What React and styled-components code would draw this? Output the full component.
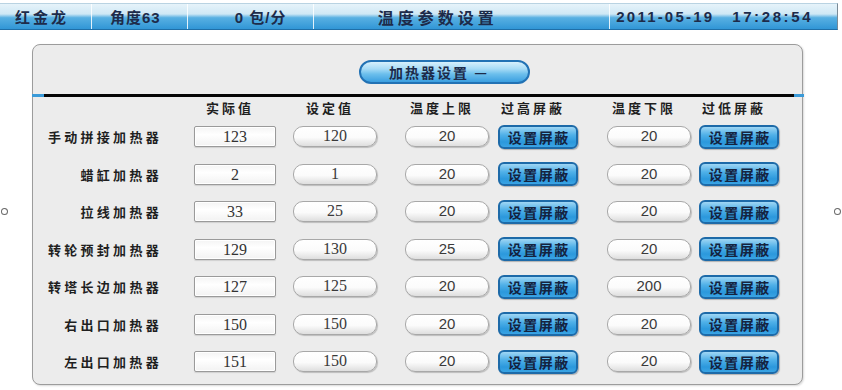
import React from 'react';
import styled, {createGlobalStyle} from 'styled-components';

const GlobalStyle = createGlobalStyle`
  html, body {
    margin: 0;
    padding: 0;
    background: #ffffff;
    font-family: "Liberation Sans", "Noto Sans CJK SC", sans-serif;
  }
  * {
    box-sizing: border-box;
  }
`;

const rows = [
  {name: '手动拼接加热器', actual: 123, set: 120, high: 20, low: 20},
  {name: '蜡缸加热器', actual: 2, set: 1, high: 20, low: 20},
  {name: '拉线加热器', actual: 33, set: 25, high: 20, low: 20},
  {name: '转轮预封加热器', actual: 129, set: 130, high: 25, low: 20},
  {name: '转塔长边加热器', actual: 127, set: 125, high: 20, low: 200},
  {name: '右出口加热器', actual: 150, set: 150, high: 20, low: 20},
  {name: '左出口加热器', actual: 151, set: 150, high: 20, low: 20},
];

const headers = ['实际值', '设定值', '温度上限', '过高屏蔽', '温度下限', '过低屏蔽'];
const headerWidths = [82, 84, 84, 80, 84, 80];

const App = () => {
  return (
    <Screen>
      <GlobalStyle />
      <TopBar>
        <BarCell $w={92} $pad={15} $spacing={3}>红金龙</BarCell>
        <BarCell $w={96} $pad={18}>角度63</BarCell>
        <BarCell $w={126} $pad={47}>0 包/分</BarCell>
        <BarCell $w={297} $pad={64} $spacing={4} $size={16}>温度参数设置</BarCell>
        <BarCell $w={227} $pad={6} $spacing={2.2} $last>
          <span>2011-05-19</span>
          <TimeText>17:28:54</TimeText>
        </BarCell>
      </TopBar>

      <Main>
        <Dot />
        <Panel>
          <TitleRow>
            <TitleButton type="button">加热器设置 —</TitleButton>
          </TitleRow>
          <Divider />
          <Table>
            <span />
            {headers.map((h, i) => (
              <HeadCell key={h} $w={headerWidths[i]}>{h}</HeadCell>
            ))}
            {rows.map(r => (
              <React.Fragment key={r.name}>
                <RowLabel>{r.name}</RowLabel>
                <ValueBox>{r.actual}</ValueBox>
                <PillBox $serif>{r.set}</PillBox>
                <PillBox>{r.high}</PillBox>
                <MaskButton type="button">设置屏蔽</MaskButton>
                <PillBox>{r.low}</PillBox>
                <MaskButton type="button">设置屏蔽</MaskButton>
              </React.Fragment>
            ))}
          </Table>
        </Panel>
        <Dot />
      </Main>
    </Screen>
  );
};

export default App;

const Screen = styled.div`
  width: 842px;
  height: 390px;
  overflow: hidden;
  background: #ffffff;
`;

const TopBar = styled.div`
  display: flex;
  width: 838px;
  height: 27px;
  margin-top: 3px;
  border-top: 1px solid #b9d3e2;
  border-right: 1px solid #7a8a96;
  border-bottom: 1px solid #1f6fa8;
  background: linear-gradient(
    to bottom,
    #e6f3fa 0%,
    #cfe8f5 40%,
    #58b0e2 55%,
    #3196d6 100%
  );
`;

const BarCell = styled.div`
  display: flex;
  align-items: center;
  gap: 18px;
  width: ${p => p.$w}px;
  padding-left: ${p => p.$pad}px;
  border-right: ${p => (p.$last ? 'none' : '1px solid rgba(255, 255, 255, 0.85)')};
  color: #1d2b4a;
  font-size: ${p => p.$size || 15}px;
  font-weight: bold;
  letter-spacing: ${p => p.$spacing || 1}px;
  white-space: nowrap;
`;

const TimeText = styled.span`
  letter-spacing: 2.6px;
`;

const Main = styled.div`
  display: flex;
  align-items: center;
  padding: 0 1px;
  margin-top: 14px;
`;

const Dot = styled.div`
  width: 7px;
  height: 7px;
  margin-top: -6px;
  border: 1px solid #6a6a6a;
  border-radius: 50%;
  background: #ffffff;
`;

const Panel = styled.div`
  width: 773px;
  height: 341px;
  margin: 0 31px 0 24px;
  padding-top: 15px;
  border: 1.5px solid #9c9c9c;
  border-radius: 8px;
  background: #ececec;
  box-shadow: 1px 1px 2px rgba(0, 0, 0, 0.15);
`;

const TitleRow = styled.div`
  display: flex;
  padding-left: 326px;
`;

const TitleButton = styled.button`
  width: 171px;
  height: 24px;
  padding: 0 0 0 8px;
  border: 2px solid #2272b4;
  border-radius: 12px;
  background: linear-gradient(
    to bottom,
    #d6f0fc 0%,
    #a6dbf6 35%,
    #6cbfec 60%,
    #3b9fe0 100%
  );
  color: #1d2b4a;
  font-family: "Noto Sans CJK SC", sans-serif;
  font-size: 14px;
  font-weight: bold;
  letter-spacing: 2px;
  text-align: left;
  text-indent: 20px;
`;

const Divider = styled.div`
  height: 3px;
  margin: 10px -2px 0 -1px;
  background: linear-gradient(
    to right,
    #3a9ad8 0 12px,
    #050505 12px calc(100% - 10px),
    #3a9ad8 calc(100% - 10px)
  );
`;

const Table = styled.div`
  display: grid;
  grid-template-columns: 129px 114px 101px 112px 89px 113px 88px;
  grid-template-rows: 21px repeat(7, 37.5px);
  align-items: center;
  justify-items: end;
`;

const HeadCell = styled.div`
  width: ${p => p.$w}px;
  margin-right: 5px;
  color: #1f1f1f;
  font-family: "Noto Sans CJK SC", sans-serif;
  font-size: 13px;
  font-weight: bold;
  letter-spacing: 3px;
  text-align: center;
  line-height: 18px;
`;

const RowLabel = styled.div`
  color: #1f1f1f;
  font-family: "Noto Sans CJK SC", sans-serif;
  font-size: 13px;
  font-weight: bold;
  letter-spacing: 3.3px;
  white-space: nowrap;
`;

const ValueBox = styled.div`
  width: 82px;
  height: 21px;
  border: 1px solid #9a9a9a;
  border-radius: 2px;
  background: linear-gradient(to bottom, #f4f4f4 0%, #ffffff 40%, #f2f2f2 100%);
  box-shadow: inset 0 0 0 1px #ffffff, 0 1px 1px rgba(0, 0, 0, 0.12);
  color: #333333;
  font-family: "Liberation Serif", serif;
  font-size: 16px;
  line-height: 19px;
  text-align: center;
`;

const PillBox = styled.div`
  width: 84px;
  height: 21px;
  border: 1.5px solid #a8a8a8;
  border-radius: 10px;
  background: linear-gradient(to bottom, #ffffff 0%, #fbfbfb 55%, #dedede 100%);
  box-shadow: 1px 1px 1px rgba(0, 0, 0, 0.2);
  color: #3a3a3a;
  font-family: ${p => (p.$serif ? '"Liberation Serif", serif' : '"Liberation Sans", sans-serif')};
  font-size: ${p => (p.$serif ? 16 : 15)}px;
  line-height: 18px;
  text-align: center;
`;

const MaskButton = styled.button`
  width: 80px;
  height: 24px;
  padding: 0;
  border: 2px solid #1d6aa8;
  border-radius: 6px;
  background: linear-gradient(
    to bottom,
    #9fd6f4 0%,
    #4fb0e8 40%,
    #2b98dc 75%,
    #3aa4e4 100%
  );
  box-shadow: 1px 1px 1px rgba(0, 0, 0, 0.25);
  color: #14233f;
  font-family: "Noto Sans CJK SC", sans-serif;
  font-size: 14px;
  font-weight: bold;
  letter-spacing: 1.5px;
  text-indent: 1.5px;
`;
